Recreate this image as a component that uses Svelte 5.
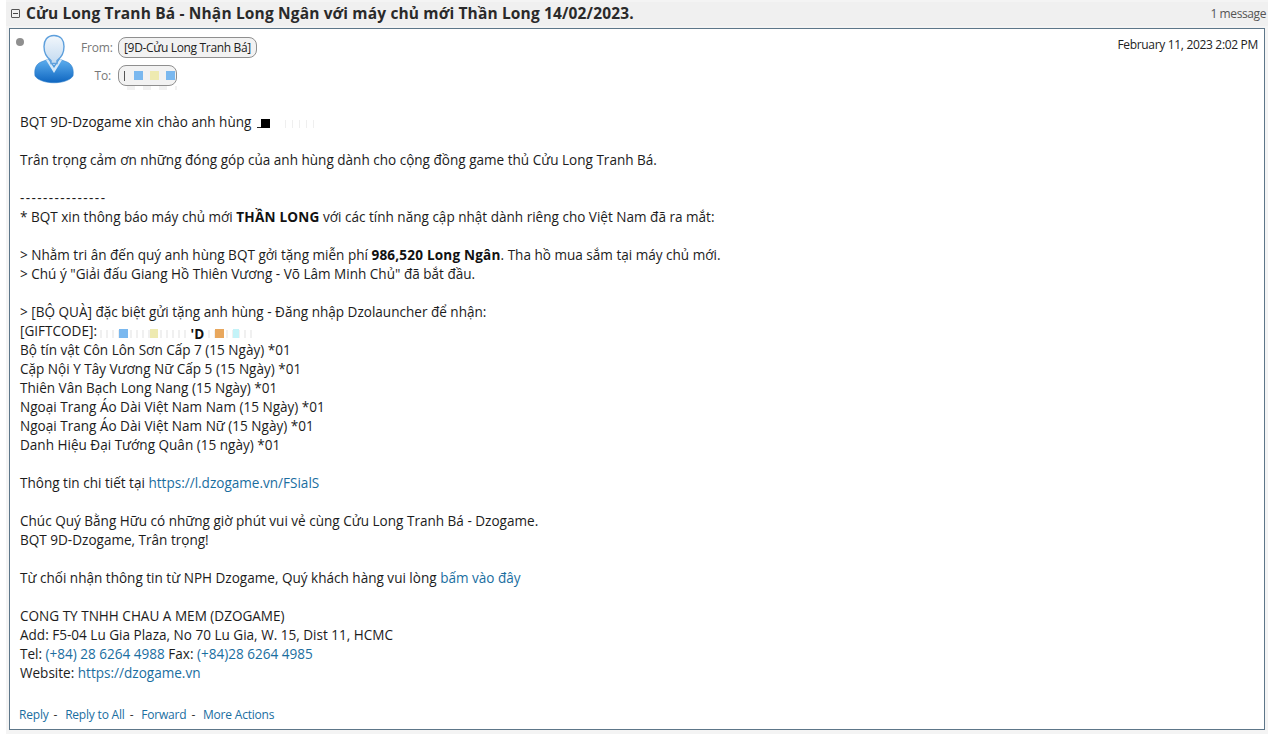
<script>
  const mixedLines = [
    'Bộ tín vật Côn Lôn Sơn Cấp 7 (15 Ngày) *01',
    'Cặp Nội Y Tây Vương Nữ Cấp 5 (15 Ngày) *01',
    'Thiên Vân Bạch Long Nang (15 Ngày) *01',
    'Ngoại Trang Áo Dài Việt Nam Nam (15 Ngày) *01',
    'Ngoại Trang Áo Dài Việt Nam Nữ (15 Ngày) *01',
    'Danh Hiệu Đại Tướng Quân (15 ngày) *01'
  ];
  const actions = ['Reply', 'Reply to All', 'Forward', 'More Actions'];
</script>

<div class="conversation">
  <header class="subject-bar">
    <span class="toggle"></span>
    <h1>Cửu Long Tranh Bá - Nhận Long Ngân với máy chủ mới Thần Long 14/02/2023.</h1>
    <span class="count">1 message</span>
  </header>

  <article class="message">
    <div class="meta">
      <span class="dot"></span>
      <svg class="avatar" viewBox="0 0 40 50" width="40" height="50" aria-hidden="true">
        <defs>
          <linearGradient id="face" x1="0" y1="0" x2="0" y2="1">
            <stop offset="0" stop-color="#f2f7fc" />
            <stop offset="1" stop-color="#c3daf0" />
          </linearGradient>
          <linearGradient id="suit" x1="0" y1="0" x2="0" y2="1">
            <stop offset="0" stop-color="#5fb0f0" />
            <stop offset="1" stop-color="#0f66c0" />
          </linearGradient>
        </defs>
        <path d="M1 42c-1-7 1-12 6-14l8-3 5 7 5-7 8 3c5 2 7 7 6 14-6 9-32 9-38 0z" fill="url(#suit)" stroke="#2f7fcb" stroke-width=".6" />
        <path d="M14 25l6 9 6-9 2 1-8 13-8-13z" fill="#d5e8f8" />
        <path d="M20 1.5c7 0 10 5 10 11 0 7-4 12-7 14v3h-6v-3c-3-2-7-7-7-14 0-6 3-11 10-11z" fill="url(#face)" stroke="#5d9fdc" stroke-width="1.4" />
      </svg>
      <div class="people">
        <div class="person">
          <span class="label">From:</span>
          <span class="pill">[9D-Cửu Long Tranh Bá]</span>
        </div>
        <div class="person">
          <span class="label">To:</span>
          <span class="pill masked">
            <i class="bar"></i>
            <i class="blk blue"></i>
            <i class="blk yellow"></i>
            <i class="blk blue"></i>
            <i class="smudge"></i>
          </span>
        </div>
      </div>
      <time>February 11, 2023 2:02 PM</time>
    </div>

    <div class="body">
      <p>BQT 9D-Dzogame xin chào anh hùng <span class="name-mask"><i class="under"></i><i class="ink"></i><i class="speck"></i></span></p>
      <p>Trân trọng cảm ơn những đóng góp của anh hùng dành cho cộng đồng game thủ Cửu Long Tranh Bá.</p>
      <p><span class="rule">---------------</span><br />* BQT xin thông báo máy chủ mới <b>THẦN LONG</b> với các tính năng cập nhật dành riêng cho Việt Nam đã ra mắt:</p>
      <p>&gt; Nhằm tri ân đến quý anh hùng BQT gởi tặng miễn phí <b>986,520 Long Ngân</b>. Tha hồ mua sắm tại máy chủ mới.<br />&gt; Chú ý "Giải đấu Giang Hồ Thiên Vương - Võ Lâm Minh Chủ" đã bắt đầu.</p>
      <p>
        &gt; [BỘ QUÀ] đặc biệt gửi tặng anh hùng - Đăng nhập Dzolauncher để nhận:<br />
        [GIFTCODE]: <span class="code-mask"><i class="blue"></i><i class="yellow"></i><b>'D</b><i class="orange"></i><i class="cyan"></i></span><br />
        {#each mixedLines as line}{line}<br />{/each}
      </p>
      <p>Thông tin chi tiết tại <a href="#top">https://l.dzogame.vn/FSialS</a></p>
      <p>Chúc Quý Bằng Hữu có những giờ phút vui vẻ cùng Cửu Long Tranh Bá - Dzogame.<br />BQT 9D-Dzogame, Trân trọng!</p>
      <p>Từ chối nhận thông tin từ NPH Dzogame, Quý khách hàng vui lòng <a href="#top">bấm vào đây</a></p>
      <p>
        CONG TY TNHH CHAU A MEM (DZOGAME)<br />
        Add: F5-04 Lu Gia Plaza, No 70 Lu Gia, W. 15, Dist 11, HCMC<br />
        Tel: <a href="#top">(+84) 28 6264 4988</a> Fax: <a href="#top">(+84)28 6264 4985</a><br />
        Website: <a href="#top">https://dzogame.vn</a>
      </p>
    </div>

    <footer class="actions">
      {#each actions as action, i}
        {#if i > 0}<span class="sep">-</span>{/if}
        <a href="#top">{action}</a>
      {/each}
    </footer>
  </article>
</div>

<style>
  :global(body) {
    background: #fff;
    font-family: "Open Sans", "Noto Sans", sans-serif;
    color: #111;
  }

  .conversation {
    width: 1262px;
    height: 734px;
    margin-left: 6px;
    padding: 2px 3px 0;
    box-sizing: border-box;
    background: #f4f4f4;
    overflow: hidden;
  }

  .subject-bar {
    height: 24px;
    margin: 0 -3px 2px;
    padding: 0 2px 2px 5px;
    box-sizing: border-box;
    background: #f0f0f0;
    display: flex;
    align-items: center;
  }

  .toggle {
    width: 9px;
    height: 9px;
    border: 1px solid #555;
    border-radius: 1px;
    box-sizing: border-box;
    margin-right: 6px;
    position: relative;
    flex: none;
  }

  .toggle::after {
    content: "";
    position: absolute;
    left: 1px;
    right: 1px;
    top: 3px;
    height: 1px;
    background: #444;
  }

  h1 {
    margin: 0;
    font-size: 15.5px;
    font-weight: 700;
    letter-spacing: 0.15px;
    color: #2a2a2a;
    flex: 1;
    white-space: nowrap;
  }

  .count {
    font-size: 12px;
    color: #555;
    letter-spacing: -0.4px;
  }

  .message {
    height: 702px;
    box-sizing: border-box;
    border: 1px solid #5d7689;
    background: #fff;
    display: flex;
    flex-direction: column;
    padding: 0 10px;
  }

  .meta {
    display: flex;
    flex: none;
    height: 84px;
    padding-top: 4px;
    box-sizing: border-box;
  }

  .dot {
    width: 8px;
    height: 8px;
    border-radius: 50%;
    background: #8f8f8f;
    margin: 5px 0 0 -4px;
    flex: none;
  }

  .avatar {
    margin: 1px 0 0 10px;
    flex: none;
  }

  .people {
    margin-left: 7px;
    display: flex;
    flex-direction: column;
    gap: 7px;
    padding-top: 4px;
  }

  .person {
    display: flex;
    align-items: center;
  }

  .label {
    width: 30px;
    margin-right: 7px;
    text-align: right;
    font-size: 12px;
    letter-spacing: -0.2px;
    color: #777;
  }

  .pill {
    height: 21px;
    box-sizing: border-box;
    border: 1px solid #8f8f8f;
    border-radius: 8px;
    background: #f2f2f2;
    padding: 0 5px;
    display: inline-flex;
    align-items: center;
    font-size: 12px;
    letter-spacing: -0.33px;
    white-space: nowrap;
    color: #222;
  }

  .masked {
    width: 59px;
    position: relative;
  }

  .bar {
    width: 1px;
    height: 10px;
    background: #555;
    margin-right: 9px;
    flex: none;
  }

  .blk {
    width: 9px;
    height: 9px;
    margin-right: 7px;
    flex: none;
  }

  .smudge {
    position: absolute;
    left: 8px;
    top: 20px;
    width: 50px;
    height: 4px;
    background: repeating-linear-gradient(90deg, #f1f1f1 0 8px, #fff 8px 16px);
  }

  .blue { background: #7ab8ef; }
  .yellow { background: #eeeab0; }
  .orange { background: #e8a75d; }
  .cyan { background: #c4f3f8; }

  time {
    margin-left: auto;
    margin-right: -4px;
    padding-top: 3px;
    font-size: 12px;
    letter-spacing: -0.32px;
    color: #222;
  }

  .body {
    flex: 1;
    min-height: 0;
    font-size: 13.56px;
    line-height: 19px;
    color: #1c1c1c;
  }

  p {
    margin: 0 0 19px;
  }

  b {
    font-weight: 700;
    letter-spacing: 0.2px;
    color: #111;
  }

  a {
    color: #1a6e9f;
    text-decoration: none;
  }

  .rule {
    letter-spacing: 1.4px;
  }

  .name-mask {
    display: inline-block;
    width: 66px;
    height: 12px;
    vertical-align: -2px;
    position: relative;
  }

  .name-mask i {
    position: absolute;
  }

  .name-mask .under {
    left: 2px;
    top: 10px;
    width: 4px;
    height: 1px;
    background: #222;
  }

  .name-mask .ink {
    left: 6px;
    top: 2px;
    width: 9px;
    height: 9px;
    background: #000;
  }

  .name-mask .speck {
    left: 30px;
    top: 3px;
    width: 34px;
    height: 8px;
    background: repeating-linear-gradient(90deg, #efefef 0 1px, #fff 1px 7px);
  }

  .code-mask {
    display: inline-flex;
    align-items: center;
    height: 12px;
    width: 154px;
    vertical-align: -2px;
    background: repeating-linear-gradient(90deg, #f0f0f0 0 2px, #fff 2px 6px) 0 2px / 100% 8px no-repeat;
  }

  .code-mask i {
    height: 9px;
    flex: none;
  }

  .code-mask .blue { width: 9px; margin-left: 19px; }
  .code-mask .yellow { width: 8px; margin-left: 22px; }
  .code-mask b { margin-left: 32px; line-height: 12px; background: #fff; }
  .code-mask .orange { width: 9px; margin-left: 10px; }
  .code-mask .cyan { width: 6px; margin-left: 9px; }

  .actions {
    flex: none;
    height: 38px;
    padding-top: 15px;
    box-sizing: border-box;
    font-size: 12px;
    letter-spacing: -0.2px;
    margin-left: -1px;
  }

  .sep {
    margin: 0 5px;
    color: #333;
  }
</style>
